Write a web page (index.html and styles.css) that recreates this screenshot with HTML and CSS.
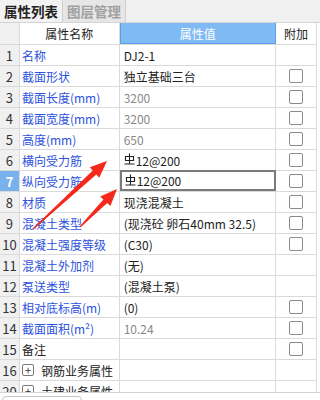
FILE: index.html
```html
<!DOCTYPE html>
<html lang="zh">
<head>
<meta charset="utf-8">
<link rel="stylesheet" href="styles.css">
</head>
<body>
<div class="page">
  <div class="tabs">
    <div class="tab active">属性列表</div>
    <div class="tab">图层管理</div>
  </div>
  <div class="grid">
    <div class="row head">
      <div class="c idx"></div>
      <div class="c name center">属性名称</div>
      <div class="c val sel-head center">属性值</div>
      <div class="c add center">附加</div>
    </div>
    <div class="row"><div class="c idx">1</div><div class="c name blue">名称</div><div class="c val">DJ2-1</div><div class="c add"></div></div>
    <div class="row"><div class="c idx">2</div><div class="c name blue">截面形状</div><div class="c val">独立基础三台</div><div class="c add"><span class="cb"></span></div></div>
    <div class="row"><div class="c idx">3</div><div class="c name blue">截面长度(mm)</div><div class="c val gray">3200</div><div class="c add"><span class="cb"></span></div></div>
    <div class="row"><div class="c idx">4</div><div class="c name blue">截面宽度(mm)</div><div class="c val gray">3200</div><div class="c add"><span class="cb"></span></div></div>
    <div class="row"><div class="c idx">5</div><div class="c name blue">高度(mm)</div><div class="c val gray">650</div><div class="c add"><span class="cb"></span></div></div>
    <div class="row"><div class="c idx">6</div><div class="c name blue">横向受力筋</div><div class="c val"><svg class="bar" viewBox="0 0 11 12" width="11" height="12"><path d="M5.5 0.5V11M1.5 3.5H9.5V7.5H1.5ZM0.5 11H10.5" fill="none" stroke="#222" stroke-width="1.1"/></svg>12@200</div><div class="c add"><span class="cb"></span></div></div>
    <div class="row"><div class="c idx cur">7</div><div class="c name blue">纵向受力筋</div><div class="c val edit"><svg class="bar" viewBox="0 0 11 12" width="11" height="12"><path d="M5.5 0.5V11M1.5 3.5H9.5V7.5H1.5ZM0.5 11H10.5" fill="none" stroke="#222" stroke-width="1.1"/></svg>12@200</div><div class="c add"><span class="cb"></span></div></div>
    <div class="row"><div class="c idx">8</div><div class="c name blue">材质</div><div class="c val">现浇混凝土</div><div class="c add"><span class="cb"></span></div></div>
    <div class="row"><div class="c idx">9</div><div class="c name blue">混凝土类型</div><div class="c val">(现浇砼 卵石40mm 32.5)</div><div class="c add"><span class="cb"></span></div></div>
    <div class="row"><div class="c idx">10</div><div class="c name blue">混凝土强度等级</div><div class="c val">(C30)</div><div class="c add"><span class="cb"></span></div></div>
    <div class="row"><div class="c idx">11</div><div class="c name blue">混凝土外加剂</div><div class="c val">(无)</div><div class="c add"></div></div>
    <div class="row"><div class="c idx">12</div><div class="c name blue">泵送类型</div><div class="c val">(混凝土泵)</div><div class="c add"></div></div>
    <div class="row"><div class="c idx">13</div><div class="c name blue">相对底标高(m)</div><div class="c val">(0)</div><div class="c add"><span class="cb"></span></div></div>
    <div class="row"><div class="c idx">14</div><div class="c name blue">截面面积(m²)</div><div class="c val gray">10.24</div><div class="c add"><span class="cb"></span></div></div>
    <div class="row"><div class="c idx">15</div><div class="c name">备注</div><div class="c val"></div><div class="c add"><span class="cb"></span></div></div>
    <div class="row"><div class="c idx">16</div><div class="c name"><span class="plus">+</span>钢筋业务属性</div><div class="c val"></div><div class="c add"></div></div>
    <div class="row"><div class="c idx">20</div><div class="c name"><span class="plus">+</span>土建业务属性</div><div class="c val"></div><div class="c add"></div></div>
  </div>
  <div class="footer"><div class="fbox"></div></div>
  <svg class="arrows" width="320" height="400" viewBox="0 0 320 400">
    <polygon fill="#f5281c" points="33.4,229.4 96.3,174.4 99.2,177.7 107,161 89.8,167.3 92.7,170.6 32.6,228.6"/>
    <polygon fill="#f5281c" points="80.4,227.4 107.2,203.1 110.4,206.1 117,189 100.2,196.5 103.4,199.5 79.6,226.6"/>
  </svg>
</div>
</body>
</html>
```

FILE: styles.css
```css
* { box-sizing: border-box; }
html, body { margin: 0; padding: 0; background: #fff; }
.page {
  position: relative;
  width: 320px;
  height: 400px;
  overflow: hidden;
  font-family: "Noto Sans CJK SC", "Noto Sans", sans-serif;
  font-size: 12px;
  color: #222;
}
.tabs {
  display: flex;
  height: 23px;
  background: #f0f0f0;
  border-bottom: 1px solid #d4d4d4;
}
.tab {
  width: 63px;
  display: flex;
  align-items: center;
  justify-content: center;
  font-weight: bold;
  font-size: 13.5px;
  color: #a0a0a0;
  background: #e6e6e6;
  border-right: 1px solid #d0d0d0;
}
.tab.active {
  color: #222;
  background: #f2f2f2;
}
.grid {
  width: 317px;
  height: 369px;
  overflow: hidden;
  border-right: 1px solid #dadada;
}
.row {
  display: flex;
  height: 21px;
  border-bottom: 1px solid #dadada;
}
.row.head { height: 22px; }
.c {
  display: flex;
  align-items: center;
  border-right: 1px solid #dadada;
  white-space: nowrap;
  overflow: hidden;
}
.idx {
  width: 20px;
  justify-content: center;
  background: #f0f0f0;
  color: #333;
  font-size: 13px;
}
.idx.cur { background: #78b2ee; color: #fff; font-weight: bold; }
.name { width: 100px; padding-left: 2px; }
.val { width: 157px; padding-left: 4px; }
.add { width: 40px; justify-content: center; border-right: none; }
.center { justify-content: center; padding-left: 0; }
.sel-head {
  background: #7fbaf4;
  color: #fff;
  border: 1px solid #5d9fe6;
  border-top: none;
}
.blue { color: #2d52dc; }
.gray { color: #8a8a8a; }
.bar { margin-right: 1px; margin-top: -2px; }
.edit {
  border: 2px solid #7a7a7a;
  margin-top: -1px;
  height: 21px;
  padding-left: 3px;
}
.cb {
  width: 14px;
  height: 14px;
  border: 1px solid #8a8a8a;
  border-radius: 2px;
  background: #fff;
}
.plus {
  width: 12px;
  height: 12px;
  border: 1px solid #7a7a7a;
  border-radius: 2px;
  display: inline-flex;
  align-items: center;
  justify-content: center;
  font-size: 11px;
  line-height: 1;
  margin-right: 7px;
  color: #333;
}
.footer {
  height: 8px;
  border-top: 1px solid #d4d4d4;
  padding: 3px 0 0 2px;
  background: #fff;
}
.fbox {
  width: 80px;
  height: 12px;
  border: 1px solid #c4c4c4;
  border-radius: 4px;
}
.arrows { position: absolute; left: 0; top: 0; pointer-events: none; }
```
